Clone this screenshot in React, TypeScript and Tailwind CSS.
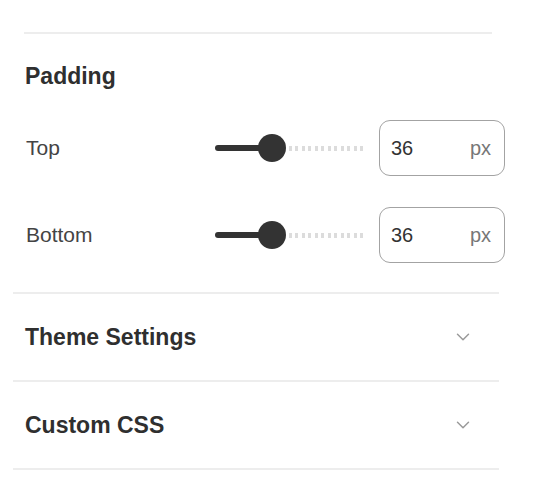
import { ChevronDown } from "lucide-react";

function Slider() {
  return (
    <div className="flex w-[150px] items-center">
      <div className="h-[6px] w-[48px] rounded-full bg-[#333333]" />
      <div className="-ml-[5px] h-[28px] w-[28px] shrink-0 rounded-full bg-[#333333]" />
      <div className="ml-[3px] h-[5px] flex-1 bg-[repeating-linear-gradient(90deg,#dcdcdc_0_3px,transparent_3px_6.5px)]" />
    </div>
  );
}

function PaddingRow({ label, value }: { label: string; value: number }) {
  return (
    <div className="flex h-[56px] items-center">
      <div className="w-[190px] pl-[1px] text-[21px] text-[#444444]">{label}</div>
      <Slider />
      <div className="ml-[14px] flex h-[56px] w-[126px] items-center justify-between rounded-[11px] border-[1.5px] border-[#a3a3a3] pl-[11px] pr-[13px]">
        <span className="text-[20px] text-[#333333]">{value}</span>
        <span className="text-[20px] text-[#777777]">px</span>
      </div>
    </div>
  );
}

function Section({ title }: { title: string }) {
  return (
    <div className="flex h-[88px] items-center justify-between border-t-2 border-[#ededed] pl-[12px] pr-[25px]">
      <span className="text-[23px] font-bold text-[#2f2f2f]">{title}</span>
      <ChevronDown className="h-[22px] w-[22px] text-[#9a9a9a]" strokeWidth={1.6} />
    </div>
  );
}

export default function App() {
  const [top, bottom] = [36, 36];

  return (
    <div className="h-[496px] w-[536px] overflow-hidden bg-white font-['Liberation_Sans',Arial,sans-serif]">
      <div className="pt-[32px]">
        <div className="ml-[24px] h-[2px] w-[468px] bg-[#ededed]" />
        <div className="pl-[25px]">
          <h2 className="mt-[29px] text-[23px] leading-[26px] font-bold text-[#2f2f2f]">Padding</h2>
          <div className="mt-[31px] flex flex-col gap-[31px] pb-[29px]">
            <PaddingRow label="Top" value={top} />
            <PaddingRow label="Bottom" value={bottom} />
          </div>
        </div>
      </div>
      <div className="ml-[13px] w-[486px] border-b-2 border-[#ededed]">
        <Section title="Theme Settings" />
        <Section title="Custom CSS" />
      </div>
    </div>
  );
}
